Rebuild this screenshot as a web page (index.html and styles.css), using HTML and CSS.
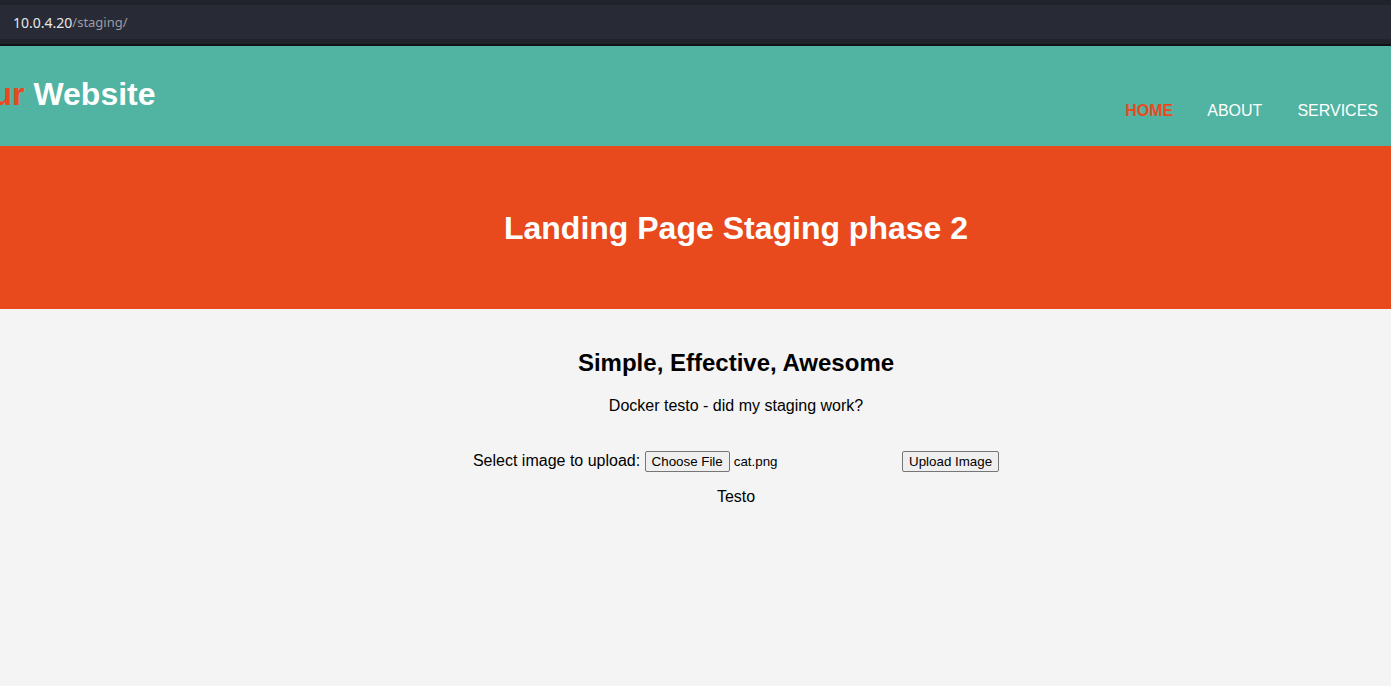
FILE: index.html
```html
<!DOCTYPE html>
<html lang="en">
<head>
<meta charset="utf-8">
<title>Staging</title>
<link rel="stylesheet" href="styles.css">
</head>
<body>
<div class="urlbar">
  <div class="urlfield">
    <span class="url-host">10.0.4.20</span><span class="url-path">/staging/</span>
  </div>
</div>
<header class="header">
  <div class="branding">
    <h1><span class="highlight">Your</span> Website</h1>
  </div>
  <nav class="nav">
    <ul>
      <li class="current"><a href="#">Home</a></li>
      <li><a href="#">About</a></li>
      <li><a href="#">Services</a></li>
    </ul>
  </nav>
</header>
<section class="showcase">
  <h1>Landing Page Staging phase 2</h1>
</section>
<section class="content">
  <h2>Simple, Effective, Awesome</h2>
  <p class="lead">Docker testo - did my staging work?</p>
  <form class="upload">
    <span class="label">Select image to upload:</span>
    <span class="fileinput"><span class="btn">Choose File</span><span class="filename">cat.png</span></span>
    <span class="btn">Upload Image</span>
  </form>
  <p class="testo">Testo</p>
</section>
</body>
</html>
```
FILE: styles.css
```css
html, body {
  margin: 0;
  padding: 0;
}
body {
  font-family: "Liberation Sans", Arial, sans-serif;
  font-size: 16px;
  background: #f4f4f4;
  color: #000;
  height: 686px;
  overflow: hidden;
}
.urlbar {
  background: #21232c;
  border-bottom: 2px solid #111217;
  padding-top: 5px;
  box-sizing: border-box;
  height: 46px;
}
.urlfield {
  height: 34px;
  background: #282a35;
  display: flex;
  align-items: center;
  padding-left: 13px;
  font-family: "Noto Sans", "Open Sans", sans-serif;
  font-size: 13px;
}
.url-host { color: #e6e6e8; font-size: 14px; }
.url-path { color: #9b9ca4; }

.header {
  background: #51b3a1;
  height: 100px;
  display: flex;
  justify-content: space-between;
  align-items: flex-start;
  color: #fff;
}
.branding h1 {
  margin: 0;
  margin-left: -46px;
  padding-top: 28px;
  font-size: 32px;
  line-height: 40px;
  font-weight: bold;
}
.highlight { color: #e84a1e; }
.nav ul {
  margin: 0;
  padding: 56px 13px 0 0;
  list-style: none;
  display: flex;
}
.nav li {
  padding-left: 35px;
}
.nav li:first-child { padding-left: 0; }
.nav li.current { margin-right: -1px; }
.nav a {
  color: #fff;
  text-decoration: none;
  text-transform: uppercase;
  font-size: 16px;
  line-height: 18px;
}
.nav .current a {
  color: #e84a1e;
  font-weight: bold;
}

.showcase {
  background: #e84a1e;
  height: 163px;
  color: #fff;
  text-align: center;
  padding-left: 81px;
  overflow: hidden;
}
.showcase h1 {
  margin: 0;
  padding-top: 63px;
  font-size: 32px;
  line-height: 38px;
  font-weight: bold;
}

.content {
  text-align: center;
  padding-left: 81px;
  padding-top: 40px;
}
.content h2 {
  margin: 0;
  font-size: 24px;
  line-height: 28px;
  font-weight: bold;
}
.lead {
  margin: 19px 0 0;
  line-height: 19px;
}
.upload {
  margin-top: 35px;
  line-height: 22px;
}
.fileinput {
  display: inline-flex;
  align-items: baseline;
  width: 253px;
  vertical-align: baseline;
}
.btn {
  display: inline-block;
  font-family: "Liberation Sans", Arial, sans-serif;
  font-size: 13.333px;
  line-height: 15px;
  padding: 2px 6px 2px;
  border: 1px solid #767676;
  border-radius: 2px;
  background: #efefef;
  color: #000;
}
.filename {
  font-size: 13.333px;
  margin-left: 4px;
}
.testo {
  margin: 14px 0 0;
  line-height: 19px;
}
```
